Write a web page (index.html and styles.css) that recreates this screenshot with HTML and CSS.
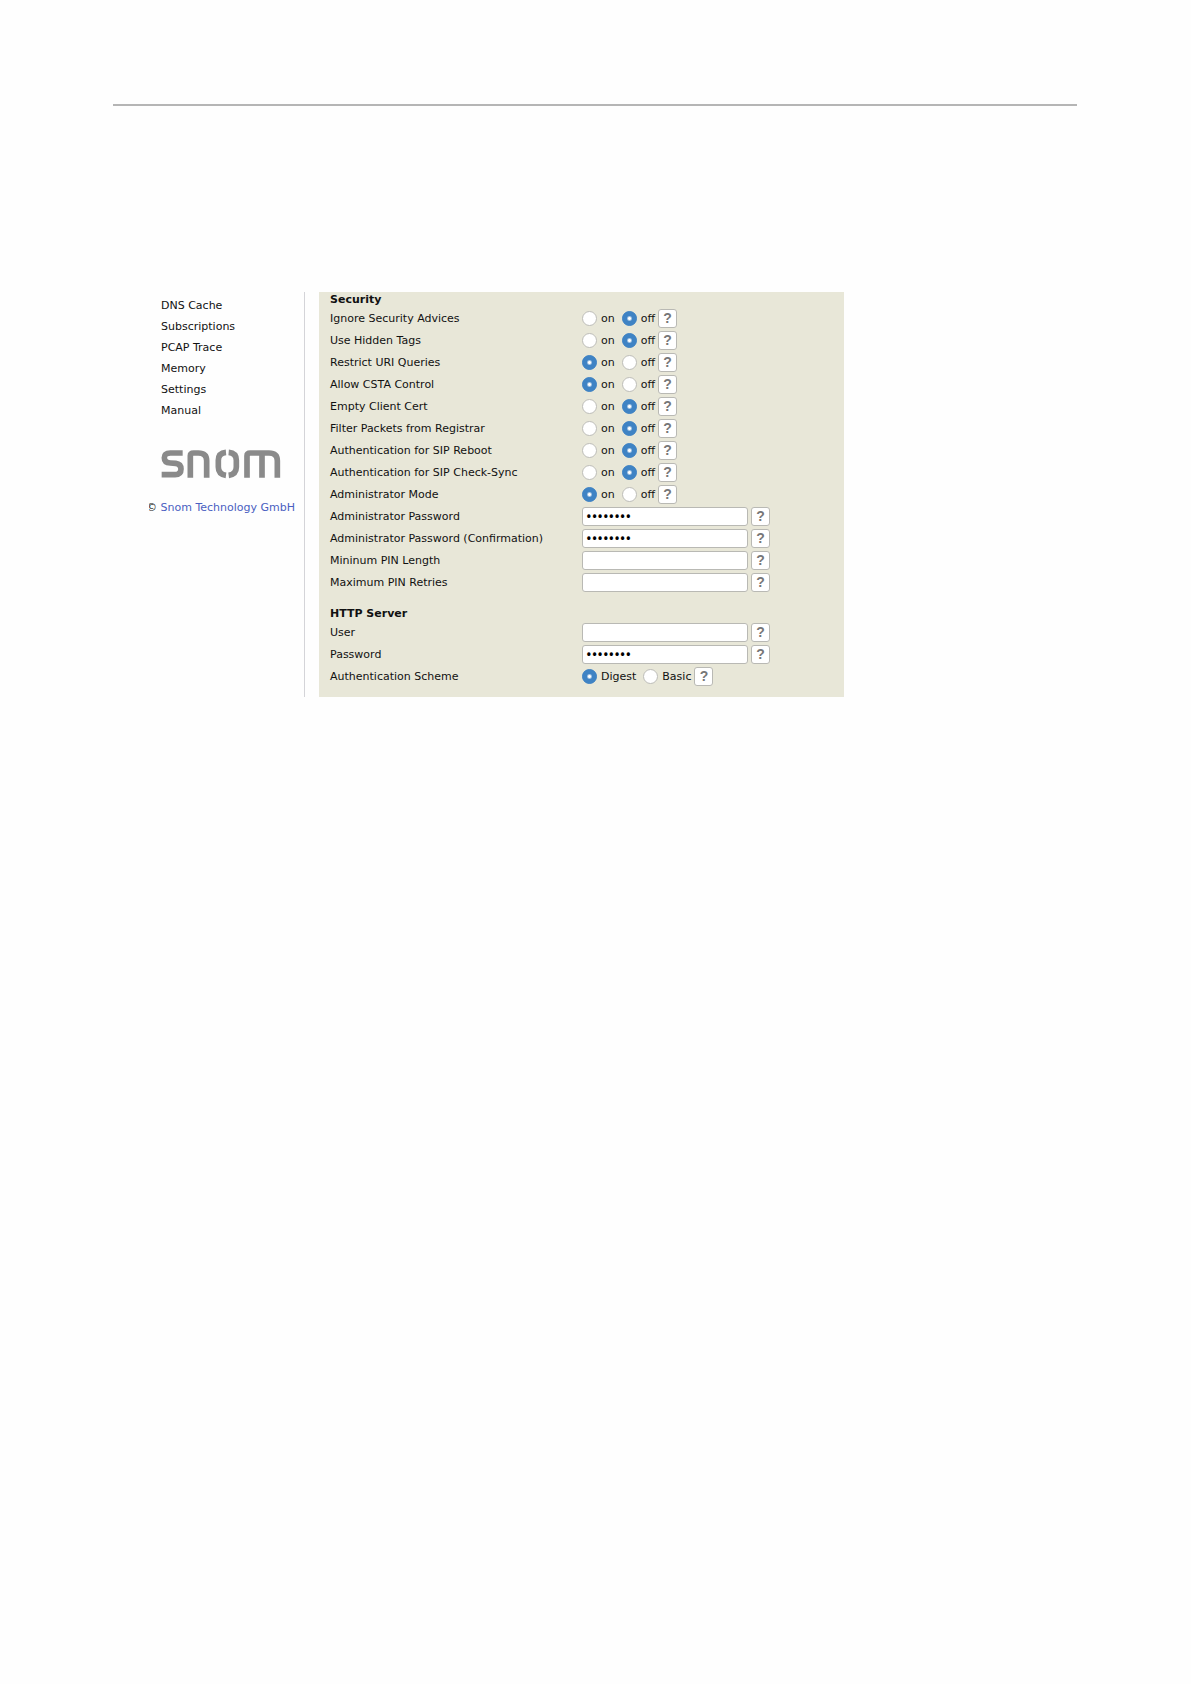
FILE: index.html
```html
<!DOCTYPE html>
<html lang="en">
<head>
  <meta charset="UTF-8">
  <title>Snom - Security</title>
  <link rel="stylesheet" href="styles.css">
</head>
<body>
  <hr class="rule">
  <div class="app">
    <aside class="sidebar">
      <nav class="menu">
        <a href="#">DNS Cache</a>
        <a href="#">Subscriptions</a>
        <a href="#">PCAP Trace</a>
        <a href="#">Memory</a>
        <a href="#">Settings</a>
        <a href="#">Manual</a>
      </nav>
      <svg class="logo" viewBox="0 0 360 90" role="img" aria-label="snom" fill="none" stroke="#8a8a8a" stroke-width="17">
        <path d="M65 12H28Q10 12 10 26Q10 41 28 42L44 43Q60 45 60 60Q60 77 42 77H2"/>
        <path d="M88 86V20Q88 12 98 12H112Q137 12 137 35V86"/>
        <path d="M195 10Q172 12 172 34V54Q172 76 195 79"/>
        <path d="M203 10Q226 12 226 34V54Q226 76 203 79"/>
        <path d="M258 86V20Q258 12 268 12H324Q349 12 349 35V86M303 12V86"/>
      </svg>
      <p class="copyright">© <a href="#">Snom Technology GmbH</a></p>
    </aside>

    <form class="panel">
      <h2>Security</h2>
      <div class="row" role="radiogroup" aria-labelledby="l1">
        <span id="l1">Ignore Security Advices</span>
        <div class="field"><label><input type="radio" name="advices">on</label><label><input type="radio" name="advices" checked>off</label><button type="button">?</button></div>
      </div>
      <div class="row" role="radiogroup" aria-labelledby="l2">
        <span id="l2">Use Hidden Tags</span>
        <div class="field"><label><input type="radio" name="tags">on</label><label><input type="radio" name="tags" checked>off</label><button type="button">?</button></div>
      </div>
      <div class="row" role="radiogroup" aria-labelledby="l3">
        <span id="l3">Restrict URI Queries</span>
        <div class="field"><label><input type="radio" name="uri" checked>on</label><label><input type="radio" name="uri">off</label><button type="button">?</button></div>
      </div>
      <div class="row" role="radiogroup" aria-labelledby="l4">
        <span id="l4">Allow CSTA Control</span>
        <div class="field"><label><input type="radio" name="csta" checked>on</label><label><input type="radio" name="csta">off</label><button type="button">?</button></div>
      </div>
      <div class="row" role="radiogroup" aria-labelledby="l5">
        <span id="l5">Empty Client Cert</span>
        <div class="field"><label><input type="radio" name="cert">on</label><label><input type="radio" name="cert" checked>off</label><button type="button">?</button></div>
      </div>
      <div class="row" role="radiogroup" aria-labelledby="l6">
        <span id="l6">Filter Packets from Registrar</span>
        <div class="field"><label><input type="radio" name="filter">on</label><label><input type="radio" name="filter" checked>off</label><button type="button">?</button></div>
      </div>
      <div class="row" role="radiogroup" aria-labelledby="l7">
        <span id="l7">Authentication for SIP Reboot</span>
        <div class="field"><label><input type="radio" name="reboot">on</label><label><input type="radio" name="reboot" checked>off</label><button type="button">?</button></div>
      </div>
      <div class="row" role="radiogroup" aria-labelledby="l8">
        <span id="l8">Authentication for SIP Check-Sync</span>
        <div class="field"><label><input type="radio" name="sync">on</label><label><input type="radio" name="sync" checked>off</label><button type="button">?</button></div>
      </div>
      <div class="row" role="radiogroup" aria-labelledby="l9">
        <span id="l9">Administrator Mode</span>
        <div class="field"><label><input type="radio" name="admin" checked>on</label><label><input type="radio" name="admin">off</label><button type="button">?</button></div>
      </div>
      <div class="row">
        <label for="admin-pass">Administrator Password</label>
        <div class="field"><input class="text" type="password" id="admin-pass" value="password"><button type="button">?</button></div>
      </div>
      <div class="row">
        <label for="admin-pass2">Administrator Password (Confirmation)</label>
        <div class="field"><input class="text" type="password" id="admin-pass2" value="password"><button type="button">?</button></div>
      </div>
      <div class="row">
        <label for="pin-length">Mininum PIN Length</label>
        <div class="field"><input class="text" type="text" id="pin-length"><button type="button">?</button></div>
      </div>
      <div class="row">
        <label for="pin-retries">Maximum PIN Retries</label>
        <div class="field"><input class="text" type="text" id="pin-retries"><button type="button">?</button></div>
      </div>

      <h2 class="next">HTTP Server</h2>
      <div class="row">
        <label for="user">User</label>
        <div class="field"><input class="text" type="text" id="user"><button type="button">?</button></div>
      </div>
      <div class="row">
        <label for="http-pass">Password</label>
        <div class="field"><input class="text" type="password" id="http-pass" value="password"><button type="button">?</button></div>
      </div>
      <div class="row" role="radiogroup" aria-labelledby="l10">
        <span id="l10">Authentication Scheme</span>
        <div class="field"><label><input type="radio" name="scheme" checked>Digest</label><label><input type="radio" name="scheme">Basic</label><button type="button">?</button></div>
      </div>
    </form>
  </div>
</body>
</html>
```
FILE: styles.css
```css
* {
  box-sizing: border-box;
}
body {
  margin: 0;
  padding: 104px 114px 104px 113px;
  background: #fefefe;
  color: #111;
  font-family: Verdana, "DejaVu Sans", sans-serif;
  font-size: 11px;
}
a {
  color: inherit;
  text-decoration: none;
}
.rule {
  height: 2px;
  margin: 0;
  border: none;
  background: #b5b5b5;
}
.app {
  display: grid;
  grid-template-columns: 156px minmax(0, 525px);
  column-gap: 14px;
  margin: 186px 0 0 36px;
}
.sidebar {
  border-right: 1px solid #d4d4d8;
  padding-top: 3px;
}
.menu {
  padding-left: 12px;
}
.menu a {
  display: block;
  line-height: 21px;
}
.logo {
  display: block;
  width: 120px;
  height: 30px;
  margin: 28px 0 19px 12px;
}
.copyright {
  margin: 0;
  overflow: hidden;
  line-height: 20px;
  text-indent: -3px;
  white-space: nowrap;
}
.copyright a {
  color: #4a5fc1;
}
.panel {
  padding: 1px 11px 10px;
  background: #e8e7d8;
}
h2 {
  margin: 0;
  font-size: 11px;
  line-height: 14px;
}
.next {
  margin-top: 14px;
}
.row {
  display: grid;
  grid-template-columns: 252px 1fr;
  align-items: center;
  height: 22px;
}
.field {
  display: flex;
  align-items: center;
}
.field label {
  display: flex;
  align-items: center;
  gap: 4px;
  margin-right: 7px;
}
.field label:last-of-type {
  margin-right: 3px;
}
input[type="radio"] {
  appearance: none;
  width: 15px;
  height: 15px;
  margin: 0;
  border: 1px solid #bdbdb8;
  border-radius: 50%;
  background: #fff;
}
input[type="radio"]:checked {
  border-color: #3f83c4;
  background: #3f83c4 radial-gradient(circle, #fff 1px, #3f83c4 3px);
}
.text {
  width: 166px;
  height: 19px;
  margin-right: 3px;
  padding: 0 3px;
  border: 1px solid #b9b9b4;
  border-radius: 3px;
  background: #fff;
  color: #000;
  font-family: inherit;
  font-size: 11px;
}
.text[type="password"] {
  font-family: Verdana, "Noto Sans", sans-serif;
  font-size: 15px;
}
button {
  width: 19px;
  height: 19px;
  padding: 0;
  border: 1px solid #b9b9b4;
  border-radius: 3px;
  background: #fff;
  color: #777;
  font-family: "Liberation Sans", sans-serif;
  font-size: 14px;
  font-weight: bold;
  line-height: 16px;
}
```
